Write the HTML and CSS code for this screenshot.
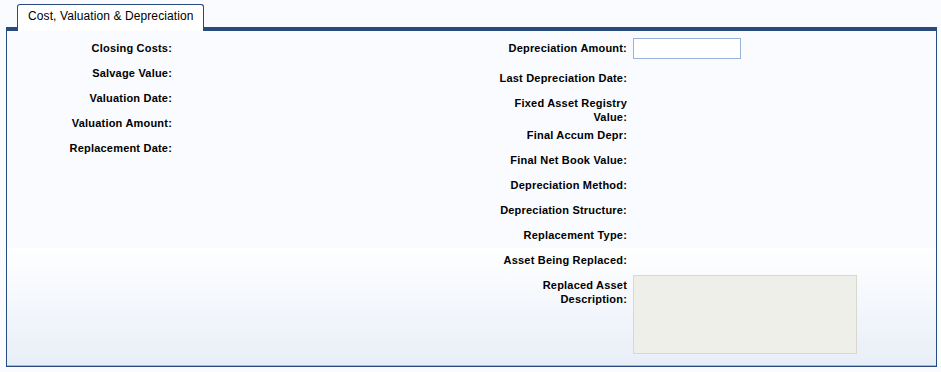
FILE: index.html
```html
<!DOCTYPE html>
<html>
<head>
<meta charset="utf-8">
<link rel="stylesheet" href="styles.css">
</head>
<body>
<div class="wrap">
  <div class="tabs">
    <div class="tab">Cost, Valuation &amp; Depreciation</div>
  </div>
  <div class="panel">
    <div class="col col-left">
      <div class="row"><div class="lbl">Closing Costs:</div><div class="val"></div></div>
      <div class="row"><div class="lbl">Salvage Value:</div><div class="val"></div></div>
      <div class="row"><div class="lbl">Valuation Date:</div><div class="val"></div></div>
      <div class="row"><div class="lbl">Valuation Amount:</div><div class="val"></div></div>
      <div class="row"><div class="lbl">Replacement Date:</div><div class="val"></div></div>
    </div>
    <div class="col col-right">
      <div class="row row-input"><div class="lbl">Depreciation Amount:</div><div class="val"><input class="field" type="text"></div></div>
      <div class="row"><div class="lbl">Last Depreciation Date:</div><div class="val"></div></div>
      <div class="row row-two"><div class="lbl">Fixed Asset Registry Value:</div><div class="val"></div></div>
      <div class="row"><div class="lbl">Final Accum Depr:</div><div class="val"></div></div>
      <div class="row"><div class="lbl">Final Net Book Value:</div><div class="val"></div></div>
      <div class="row"><div class="lbl">Depreciation Method:</div><div class="val"></div></div>
      <div class="row"><div class="lbl">Depreciation Structure:</div><div class="val"></div></div>
      <div class="row"><div class="lbl">Replacement Type:</div><div class="val"></div></div>
      <div class="row"><div class="lbl">Asset Being Replaced:</div><div class="val"></div></div>
      <div class="row"><div class="lbl">Replaced Asset Description:</div><div class="val"><div class="area"></div></div></div>
    </div>
  </div>
</div>
</body>
</html>
```

FILE: styles.css
```css
html, body {
  margin: 0;
  padding: 0;
  background: #f9fbfe;
  font-family: "Liberation Sans", Arial, sans-serif;
  color: #000;
}
.wrap {
  padding: 4px 0 0 6px;
  width: 931px;
}
.tabs {
  display: flex;
  padding-left: 11px;
  height: 23px;
  position: relative;
  z-index: 2;
}
.tab {
  box-sizing: border-box;
  width: 187px;
  height: 27px;
  background: #ffffff;
  border: 1px solid #284a7c;
  border-bottom: none;
  border-radius: 3px 3px 0 0;
  padding: 4px 0 0 10px;
  font-size: 12px;
  line-height: 15px;
  letter-spacing: 0.1px;
  color: #000;
  white-space: nowrap;
}
.panel {
  box-sizing: border-box;
  height: 340px;
  border: 1px solid #284a7c;
  border-top: 4px solid #284a7c;
  box-shadow: inset 0 -1px 0 #a9b8cf;
  background: linear-gradient(to bottom, #f9fbfe 0, #f9fbfe 217px, #ffffff 217px, #e8eef8 100%);
  display: flex;
  padding-top: 5px;
}
.col-left {
  width: 486px;
}
.row {
  box-sizing: border-box;
  display: flex;
  min-height: 25px;
  padding-top: 5px;
}
.row-two {
  height: 32px;
}
.lbl {
  font-weight: bold;
  font-size: 11px;
  line-height: 14px;
  letter-spacing: 0.2px;
  text-align: right;
}
.col-left .lbl {
  width: 165px;
}
.col-right .lbl {
  width: 134px;
}
.val {
  margin-left: 6px;
}
.row-input {
  min-height: 30px;
}
.field {
  box-sizing: border-box;
  display: block;
  width: 108px;
  height: 21px;
  margin: -3px 0 0 0;
  padding: 0;
  border: 1px solid #98b4dc;
  background: #ffffff;
  outline: none;
}
.area {
  box-sizing: border-box;
  width: 224px;
  height: 79px;
  margin-top: -3px;
  background: #efefea;
  border: 1px solid #d8d8d0;
}
```
